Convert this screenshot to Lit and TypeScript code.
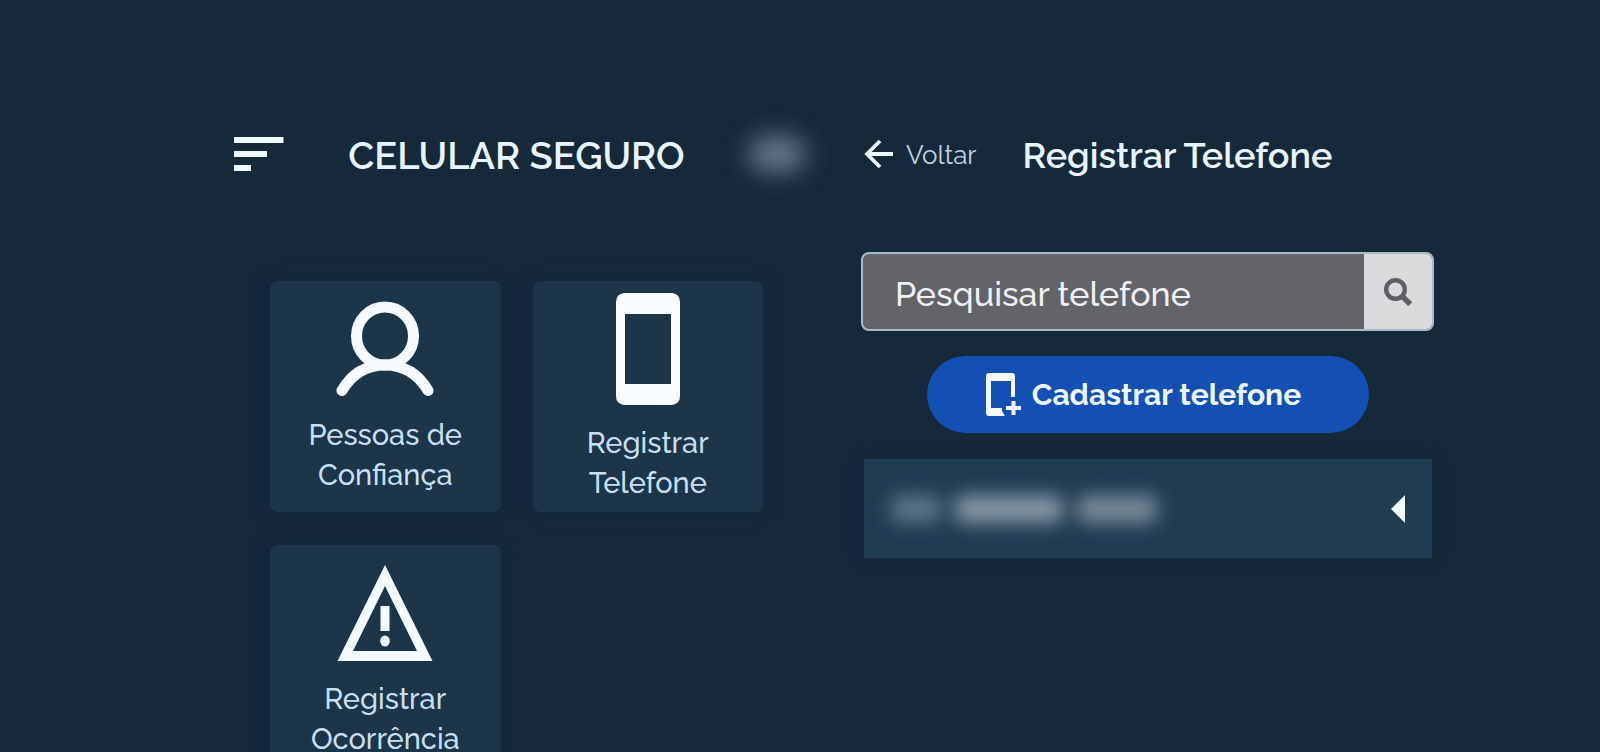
import { LitElement, html, css, svg } from "lit";
import { customElement, property } from "lit/decorators.js";

const personIcon = svg`
  <svg width="98" height="96" viewBox="0 0 98 96" fill="none" stroke="#f5fafe" stroke-width="11" stroke-linecap="round" aria-hidden="true">
    <ellipse cx="49" cy="35" rx="28.500" ry="29" />
    <path d="M6 89.500C16 72.500 31 64 49 64s33 8.500 43 25.500" />
  </svg>`;

const phoneIcon = svg`
  <svg width="66" height="112" viewBox="0 0 66 112" fill="#f8fbff" aria-hidden="true">
    <path fill-rule="evenodd" d="M9 0H57Q65 1 65 9V103Q65 111 57 112H9Q1 111 1 103V9Q1 1 9 0ZM10 21V91H56V21Z" />
  </svg>`;

const warningIcon = svg`
  <svg width="96" height="96" viewBox="0 0 96 96" fill="#f3fbff" aria-hidden="true">
    <path fill-rule="evenodd" d="M48 0L95.500 96H.5ZM48 21L16 86H80Z" />
    <path d="M43.500 41h9v25h-9z" />
    <ellipse cx="48" cy="76" rx="4.800" ry="5.500" />
  </svg>`;

@customElement("menu-card")
class MenuCard extends LitElement {
  @property() label = "";
  @property({ attribute: false }) icon: unknown;

  static styles = css`
    :host {
      display: block;
    }
    .card {
      box-sizing: border-box;
      width: 100%;
      aspect-ratio: 1;
      display: flex;
      flex-direction: column;
      align-items: center;
      justify-content: center;
      gap: 18px;
      padding: 4px 32px 0;
      border: 0;
      border-radius: 8px;
      background: #1c3549;
      box-shadow: 0 0 16px #122840;
      color: #c8dff2;
      font: 500 29px/40px Raleway, Lato, sans-serif;
      cursor: pointer;
    }
    svg {
      display: block;
      flex: none;
    }
  `;

  render() {
    return html`<button class="card" type="button">${this.icon}<span>${this.label}</span></button>`;
  }
}

@customElement("app-root")
class AppRoot extends LitElement {
  static styles = css`
    :host {
      display: block;
      font-family: Raleway, Lato, sans-serif;
      color: #e8f5ff;
    }
    .page {
      box-sizing: border-box;
      height: 100vh;
      overflow: hidden;
      display: grid;
      grid-template-columns: 1fr 1fr;
      gap: 54px;
      padding: 124px 166px 0 234px;
      background: #16293a;
    }
    .bar {
      display: flex;
      align-items: center;
      height: 60px;
    }
    .home .bar {
      justify-content: space-between;
      margin-bottom: 97px;
    }
    .phones .bar {
      gap: 46px;
      margin-bottom: 68px;
    }
    h1,
    h2 {
      margin: 0;
      padding-top: 4px;
      font-size: 38px;
      line-height: 48px;
      font-weight: 600;
      white-space: nowrap;
    }
    h2 {
      padding-top: 2px;
      font-size: 36px;
    }
    svg {
      display: block;
      flex: none;
    }
    .menu {
      padding: 0;
      border: 0;
      background: none;
      cursor: pointer;
    }
    .avatar {
      width: 56px;
      height: 36px;
      margin-right: 2px;
      border-radius: 16px;
      background: #64778a;
      filter: blur(12px);
    }
    .cards {
      display: grid;
      grid-template-columns: 1fr 1fr;
      gap: 33px 32px;
      padding: 0 44px 0 36px;
    }
    .back {
      display: flex;
      align-items: center;
      gap: 12px;
      padding-left: 3px;
      color: #c3d3e0;
      font-size: 26px;
      line-height: 36px;
      text-decoration: none;
    }
    .back span {
      padding-top: 2px;
    }
    .search {
      box-sizing: border-box;
      display: flex;
      height: 79px;
      border: 2px solid #a9bac7;
      border-radius: 8px;
      overflow: hidden;
      background: #636467;
    }
    .search input {
      flex: 1;
      min-width: 0;
      padding: 4px 32px 0;
      border: 0;
      outline: 0;
      background: none;
      color: #f0eff5;
      font: 500 34px/44px Raleway, Lato, sans-serif;
    }
    .search input::placeholder {
      color: #f0eff5;
      opacity: 1;
    }
    .search button {
      width: 68px;
      display: grid;
      place-items: center;
      padding: 0;
      border: 0;
      background: #dadbdd;
      cursor: pointer;
    }
    .add {
      display: flex;
      align-items: center;
      justify-content: center;
      gap: 11px;
      width: 442px;
      max-width: 100%;
      height: 77px;
      margin: 25px auto 26px;
      padding: 0 8px 0 0;
      border: 0;
      border-radius: 40px;
      background: #1450b3;
      color: #edf8ff;
      font: 700 30px/40px Raleway, Lato, sans-serif;
      cursor: pointer;
    }
    .row {
      box-sizing: border-box;
      display: flex;
      align-items: center;
      justify-content: space-between;
      height: 99px;
      margin: 0 2px 0 3px;
      padding: 0 27px;
      background: #203c53;
      box-shadow: 0 0 12px #12283f;
    }
    .number {
      display: flex;
      align-items: center;
      gap: 14px;
      filter: blur(9px);
    }
    .number i {
      height: 28px;
      border-radius: 8px;
      background: #8496a4;
    }
    .number .area {
      width: 50px;
      background: #5b7485;
    }
    .number .prefix {
      width: 108px;
    }
    .number .suffix {
      width: 80px;
      background: #778a98;
    }
  `;

  render() {
    return html`
      <main class="page">
        <section class="home">
          <header class="bar">
            <button class="menu" type="button" aria-label="Menu">
              <svg width="50" height="34" viewBox="0 0 50 34" fill="#eef8ff">
                <path d="M0 0H49.500V6H0ZM0 14H33V20H0ZM0 28H17V34H0Z" />
              </svg>
            </button>
            <h1>CELULAR SEGURO</h1>
            <div class="avatar"></div>
          </header>
          <nav class="cards">
            <menu-card .icon=${personIcon} label="Pessoas de Confiança"></menu-card>
            <menu-card .icon=${phoneIcon} label="Registrar Telefone"></menu-card>
            <menu-card .icon=${warningIcon} label="Registrar Ocorrência"></menu-card>
          </nav>
        </section>
        <section class="phones">
          <header class="bar">
            <a class="back" href="#">
              <svg width="30" height="30" viewBox="0 0 30 30" fill="none" stroke="#eef8ff" stroke-width="3.800">
                <path d="M16 2L3 15L16 28M3 15H29" />
              </svg>
              <span>Voltar</span>
            </a>
            <h2>Registrar Telefone</h2>
          </header>
          <form class="search" role="search">
            <input type="text" placeholder="Pesquisar telefone" aria-label="Pesquisar telefone" />
            <button type="button" aria-label="Pesquisar">
              <svg width="28" height="28" viewBox="0 0 28 28" fill="none" stroke="#606064">
                <circle cx="11.500" cy="11.500" r="9.300" stroke-width="4.400" />
                <path d="M18 18L26.200 26.200" stroke-width="5.500" />
              </svg>
            </button>
          </form>
          <button class="add" type="button">
            <svg width="35" height="43" viewBox="0 0 35 43" fill="#f2faff" aria-hidden="true">
              <path fill-rule="evenodd" d="M3 0H26Q29 0 29 3V24H25V8H5V35H16V38L19 43H3Q0 43 0 40V3Q0 0 3 0Z" />
              <path d="M25.500 28H29.500V33H35V37H29.500V42H25.500V37H20V33H25.500Z" />
            </svg>
            Cadastrar telefone
          </button>
          <div class="row">
            <div class="number"><i class="area"></i><i class="prefix"></i><i class="suffix"></i></div>
            <svg width="14" height="28" viewBox="0 0 14 28" fill="#f3faff"><path d="M14 0V28L0 14Z" /></svg>
          </div>
        </section>
      </main>
    `;
  }
}
